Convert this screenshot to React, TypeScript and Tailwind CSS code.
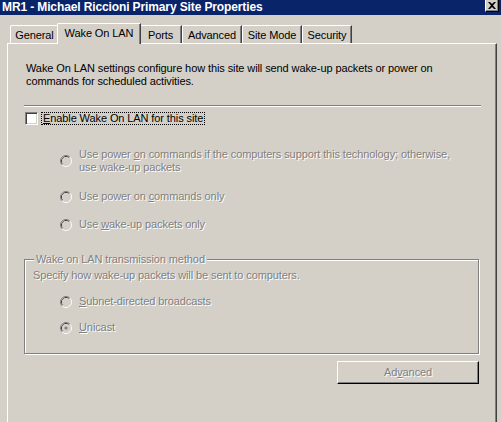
import type { ReactNode } from "react";

const dim = "text-[#808080] [text-shadow:1px_1px_0_#fff]";

function Radio({ checked }: { checked?: boolean }) {
  return (
    <svg width="12" height="12" viewBox="0 0 12 12" className="shrink-0">
      <path d="M2.11 9.89 A5.5 5.5 0 0 1 9.89 2.11" fill="none" stroke="#808080" />
      <path d="M9.89 2.11 A5.5 5.5 0 0 1 2.11 9.89" fill="none" stroke="#ffffff" />
      <path d="M2.82 9.18 A4.5 4.5 0 0 1 9.18 2.82" fill="none" stroke="#404040" />
      <path d="M9.18 2.82 A4.5 4.5 0 0 1 2.82 9.18" fill="none" stroke="#d4d0c8" />
      <circle cx="6" cy="6" r="4" fill="#d4d0c8" />
      {checked && <circle cx="6" cy="6" r="1.6" fill="#808080" />}
    </svg>
  );
}

function Option({ children, checked, className = "" }: { children: ReactNode; checked?: boolean; className?: string }) {
  return (
    <div className={`flex items-center ${className}`}>
      <Radio checked={checked} />
      <div className={`ml-[7px] ${dim}`}>{children}</div>
    </div>
  );
}

const tabs = [
  { label: "General", w: "w-[49px]" },
  { label: "Wake On LAN", w: "w-[84px]", active: true },
  { label: "Ports", w: "w-[43px]" },
  { label: "Advanced", w: "w-[60px]" },
  { label: "Site Mode", w: "w-[60px]" },
  { label: "Security", w: "w-[50px]" },
];

export default function App() {
  return (
    <div className="flex h-[422px] w-[501px] flex-col overflow-hidden bg-[#d4d0c8] font-['Liberation_Sans',Arial,sans-serif] text-[11px] leading-[13px] tracking-[-0.1px] text-black">
      {/* title bar */}
      <div className="flex h-[15px] items-start justify-between bg-[#0a246a] pl-[2px] pr-[2px]">
        <span className="pt-[1px] text-[12px] font-bold leading-[13px] tracking-[-0.12px] text-white">
          MR1 - Michael Riccioni Primary Site Properties
        </span>
        <div className="flex h-[12px] w-[14px] items-center justify-center border-b border-l border-r border-b-black border-l-white border-r-black bg-[#d4d0c8] shadow-[inset_-1px_-1px_0_#808080]">
          <svg width="8" height="7" viewBox="0 0 8 7">
            <path d="M0 0h2l2 2 2-2h2L5 3.5 8 7H6L4 5 2 7H0l3-3.5z" fill="#000" />
          </svg>
        </div>
      </div>

      {/* tabs */}
      <div className="flex h-[28px] items-end pl-[10px]">
        {tabs.map((t) =>
          t.active ? (
            <div
              key={t.label}
              className={`relative z-10 -mx-[2px] -mb-px flex h-[21px] ${t.w} justify-center rounded-tl-[2px] border-l border-t border-r border-l-white border-t-white border-r-[#404040] bg-[#d4d0c8] pt-[3px] shadow-[inset_-1px_0_0_#808080]`}
            >
              {t.label}
            </div>
          ) : (
            <div
              key={t.label}
              className={`flex h-[18px] ${t.w} justify-center rounded-tl-[2px] border-l border-t border-r border-l-white border-t-white border-r-[#404040] pt-[3px] shadow-[inset_-1px_0_0_#808080]`}
            >
              {t.label}
            </div>
          )
        )}
      </div>

      {/* page */}
      <div className="ml-[7px] flex w-[490px] flex-1 flex-col border-l border-t border-r border-l-white border-t-white border-r-[#404040] shadow-[inset_-1px_0_0_#808080]">
        <p className="ml-[18px] mt-[18px] w-[440px]">
          Wake On LAN settings configure how this site will send wake-up packets or power on commands for scheduled
          activities.
        </p>

        <div className="ml-[16px] mt-[17px] h-[2px] w-[457px] border-t border-b border-t-[#808080] border-b-white" />

        <div className="ml-[17px] mt-[5px] flex h-[13px] items-center">
          <div className="h-[13px] w-[13px] border border-b-white border-l-[#808080] border-r-white border-t-[#808080] bg-white shadow-[inset_1px_1px_0_#404040,inset_-1px_-1px_0_#d4d0c8]" />
          <span className="ml-[3px] border border-dotted border-black px-[1px] leading-[11px]">
            <u>E</u>nable Wake On LAN for this site
          </span>
        </div>

        <div className="ml-[52px] flex flex-col">
          <Option className="mt-[23px]">
            Use power <u>o</u>n commands if the computers support this technology; otherwise,
            <br />
            use wake-up packets
          </Option>
          <Option className="mt-[16px]">
            Use power on <u>c</u>ommands only
          </Option>
          <Option className="mt-[15px]">
            Use <u>w</u>ake-up packets only
          </Option>
        </div>

        <div className="relative ml-[16px] mt-[28px] h-[95px] w-[455px] border border-[#808080] pl-[8px] pt-[9px] shadow-[inset_1px_1px_0_#fff,1px_1px_0_#fff]">
          <span className={`absolute -top-[7px] left-[9px] bg-[#d4d0c8] px-[2px] ${dim}`}>
            Wake on LAN transmission method
          </span>
          <p className={dim}>Specify how wake-up packets will be sent to computers.</p>
          <Option className="ml-[27px] mt-[13px]">
            <u>S</u>ubnet-directed broadcasts
          </Option>
          <Option checked className="ml-[27px] mt-[13px]">
            <u>U</u>nicast
          </Option>
        </div>

        <div
          className={`ml-[329px] mt-[7px] flex h-[23px] w-[142px] items-center justify-center border border-b-black border-l-white border-r-black border-t-white shadow-[inset_-1px_-1px_0_#808080] ${dim}`}
        >
          Ad<u>v</u>anced
        </div>
      </div>
    </div>
  );
}
